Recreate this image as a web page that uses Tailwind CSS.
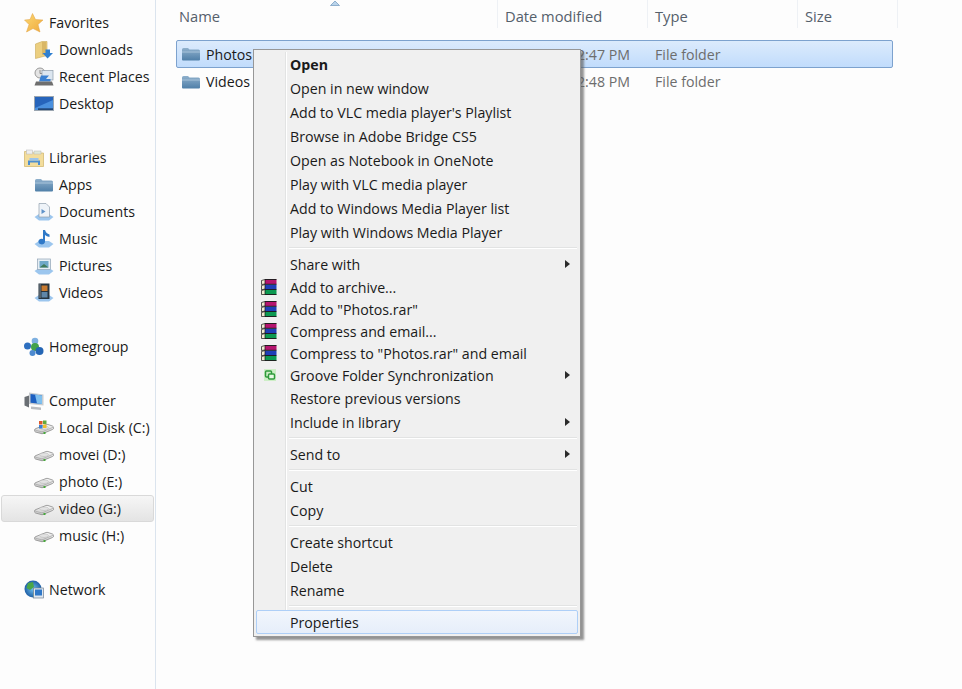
<!DOCTYPE html>
<html lang="en">
<head>
<meta charset="UTF-8">
<title>Explorer context menu</title>
<script src="https://cdn.jsdelivr.net/npm/@tailwindcss/browser@4"></script>
</head>
<body class="bg-[#fdfdfd] font-['Open_Sans',sans-serif] text-[14.2px] leading-[21px] text-[#1a1a1a]">
<!-- shared icons -->
<svg class="absolute w-0 h-0" aria-hidden="true">
  <defs>
    <linearGradient id="fold" x1="0" y1="0" x2="0" y2="1"><stop offset="0" stop-color="#8fb0cc"/><stop offset="1" stop-color="#4f7fa8"/></linearGradient>
    <linearGradient id="disk" x1="0" y1="0" x2="0" y2="1"><stop offset="0" stop-color="#fafafa"/><stop offset="1" stop-color="#c4c4c4"/></linearGradient>
    <radialGradient id="globe"><stop offset="0" stop-color="#6fc0ee"/><stop offset="1" stop-color="#1f5fa6"/></radialGradient>
    <linearGradient id="gold" x1="0" y1="0" x2="1" y2="1"><stop offset="0" stop-color="#fbd873"/><stop offset="1" stop-color="#f0a93c"/></linearGradient>
  </defs>
  <symbol id="folder" viewBox="0 0 20 20"><path d="M1 5.500Q1 4 2.500 4H7L8.500 5.500H17.500Q19 5.500 19 7V15.500Q19 16.500 18 16.500H2Q1 16.500 1 15.500Z" fill="url(#fold)"/><path d="M1 8H19" stroke="#a8c3da" stroke-width="1"/></symbol>
  <symbol id="drive" viewBox="0 0 20 20"><path d="M0.500 12Q0.500 11 2 10.500L12 6.500Q13 6.200 14 6.500L18.500 8Q19.500 8.500 19.500 9.500V10.500Q19.500 11 18.500 11.500L9 15.500Q8 16 7 15.500L1.500 14Q0.500 13.500 0.500 12.500Z" fill="url(#disk)" stroke="#8a8a8a" stroke-width=".8"/><path d="M1 12L7 13.700Q8 14 9 13.500L19 9.300" fill="none" stroke="#a5a5a5" stroke-width=".7"/><ellipse cx="10" cy="9.700" rx="4.500" ry="1.800" fill="#e2e2e2" stroke="#b0b0b0" stroke-width=".5"/><rect x="9.500" y="14" width="2" height="2" fill="#46a83a"/></symbol>
  <symbol id="rar" viewBox="0 0 16 16"><path d="M4 0.500H15.500V5H4Z" fill="#b5146f"/><path d="M4 5.500H15.500V10.500H4Z" fill="#1f3fb8"/><path d="M4 11H15.500V15.500H4Z" fill="#0d9a52"/><path d="M0.500 1.500L4 0.500V5L0.500 5.500ZM0.500 6.500L4 5.500V10L0.500 10.800ZM0.500 11.500L4 10.500V15.500L0.500 15.500Z" fill="#f1ecd2" stroke="#111" stroke-width=".7"/><path d="M4 0.500H15.500M4 5.300H15.500M4 10.500H15.500M4 15.500H15.500" stroke="#111" stroke-width=".9"/></symbol>
</svg>

<div class="flex h-[689px] w-[962px] overflow-hidden relative">
  <!-- navigation pane -->
  <aside class="w-[156px] shrink-0 border-r border-[#dbe4ee] pt-[9px] pl-[1px] pr-[1px]">
    <div class="flex h-[27px] items-center gap-[5px] pl-[23px]">
      <svg class="w-5 h-5" viewBox="0 0 20 20"><path d="M8.500 0.500L11.500 6.500L19 7L14 11.500L16 19L9 15.500L2.500 19L5 11.500L0.500 7L6 6.500Z" fill="url(#gold)" stroke="#e0a040" stroke-width=".5"/></svg>
      <span>Favorites</span>
    </div>
    <div class="flex h-[27px] items-center gap-[5px] pl-[33px]">
      <svg class="w-5 h-5" viewBox="0 0 20 20"><path d="M1.500 4L8 1.500H13V15.500L1.500 18.500Z" fill="#eccf80" stroke="#c9a957" stroke-width=".6"/><path d="M8 2H12V15H8Z" fill="#d9b766"/><path d="M11.500 9.500H16V13H19L13.500 18.500L8.500 13H11.500Z" fill="#2f7fd0"/></svg>
      <span>Downloads</span>
    </div>
    <div class="flex h-[27px] items-center gap-[5px] pl-[33px]">
      <svg class="w-5 h-5" viewBox="0 0 20 20"><circle cx="6" cy="6" r="5" fill="#e4e4e4" stroke="#9a9a9a"/><path d="M6 3V6.500H9" fill="none" stroke="#777" stroke-width=".8"/><rect x="8" y="3.500" width="11" height="9.500" fill="#dce6f0" stroke="#8d9aa8" stroke-width=".7"/><path d="M7 8.500H15L12 12H16.500V14.500L5 14.500Z" fill="#3a80d2"/><path d="M2 14.500H18L19.500 18.500H0.500Z" fill="#6e6e6e"/></svg>
      <span>Recent Places</span>
    </div>
    <div class="flex h-[27px] items-center gap-[5px] pl-[33px]">
      <svg class="w-5 h-5" viewBox="0 0 20 20"><rect x="0.500" y="2.500" width="19" height="14" fill="#2664bb" stroke="#9aa5b0"/><path d="M1 14L19 6V16H1Z" fill="#4a90de"/><rect x="4" y="14.500" width="15" height="1.200" fill="#10294e"/></svg>
      <span>Desktop</span>
    </div>
    <div class="h-[27px]"></div>

    <div class="flex h-[27px] items-center gap-[5px] pl-[23px]">
      <svg class="w-5 h-5" viewBox="0 0 20 20"><path d="M0.500 3.500H8L9.500 5H19.500V18.500H0.500Z" fill="#f3dd9c" stroke="#cfb368" stroke-width=".7"/><rect x="2.500" y="2" width="6" height="4" fill="#eee" stroke="#b8b8b8" stroke-width=".5"/><rect x="10" y="3" width="7" height="3" fill="#dfe9d8" stroke="#b8b8b8" stroke-width=".5"/><path d="M4 12.500H16V17H14V14.500H6V17H4Z" fill="#4d8fd0"/><rect x="5.500" y="10" width="9" height="2.500" fill="#9cc4ea"/></svg>
      <span>Libraries</span>
    </div>
    <div class="flex h-[27px] items-center gap-[5px] pl-[33px]"><svg class="w-5 h-5"><use href="#folder"/></svg><span>Apps</span></div>
    <div class="flex h-[27px] items-center gap-[5px] pl-[33px]">
      <svg class="w-5 h-5" viewBox="0 0 20 20"><path d="M0.500 15L5 12H15L19.500 15L15 18.500H5Z" fill="#9cc6ee"/><path d="M5 1.500H12L15.500 5V15H5Z" fill="#eef3f8" stroke="#8f9fae" stroke-width=".7"/><path d="M7.500 7L11.500 9.500L7.500 12Z" fill="#5f93c9"/></svg>
      <span>Documents</span>
    </div>
    <div class="flex h-[27px] items-center gap-[5px] pl-[33px]">
      <svg class="w-5 h-5" viewBox="0 0 20 20"><path d="M0.500 15L5 12H15L19.500 15L15 18.500H5Z" fill="#9cc6ee"/><path d="M11 1V12.500A3.300 2.800 0 1 1 9 10V1H11Q12 4.500 15.500 5.500V8Q12.500 7.500 11 6Z" fill="#2f79c8"/></svg>
      <span>Music</span>
    </div>
    <div class="flex h-[27px] items-center gap-[5px] pl-[33px]">
      <svg class="w-5 h-5" viewBox="0 0 20 20"><path d="M0.500 15L5 12H15L19.500 15L15 18.500H5Z" fill="#9cc6ee"/><rect x="3.500" y="3" width="13" height="10.500" fill="#e6eef5" stroke="#8fa3b6" stroke-width=".7"/><rect x="5.500" y="5" width="9" height="6.500" fill="#6fa8c8"/><path d="M5.500 11.500L10 8L14.500 11.500Z" fill="#3f7a5a"/></svg>
      <span>Pictures</span>
    </div>
    <div class="flex h-[27px] items-center gap-[5px] pl-[33px]">
      <svg class="w-5 h-5" viewBox="0 0 20 20"><path d="M0.500 15L5 12H15L19.500 15L15 18.500H5Z" fill="#9cc6ee"/><rect x="4.500" y="0.500" width="11" height="15.500" fill="#27343f"/><rect x="7.500" y="2.500" width="6" height="5.500" fill="#c77a30"/><rect x="7.500" y="9" width="6" height="5.500" fill="#5f86a8"/><path d="M6 1.500V15.500" stroke="#dfe7ee" stroke-dasharray="1 1"/></svg>
      <span>Videos</span>
    </div>
    <div class="h-[27px]"></div>

    <div class="flex h-[27px] items-center gap-[5px] pl-[23px]">
      <svg class="w-5 h-5" viewBox="0 0 20 20"><circle cx="3.500" cy="9" r="3.500" fill="#2d6fc0"/><circle cx="11" cy="4" r="3.300" fill="#7eb0e0"/><circle cx="11" cy="10" r="4" fill="#43a24a"/><circle cx="15.500" cy="14" r="4" fill="#2566b5"/><circle cx="8.500" cy="16" r="3" fill="#4d8ad0"/></svg>
      <span>Homegroup</span>
    </div>
    <div class="h-[27px]"></div>

    <div class="flex h-[27px] items-center gap-[5px] pl-[23px]">
      <svg class="w-5 h-5" viewBox="0 0 20 20"><path d="M5 1.500L19.500 3.500V14.500L5 13Z" fill="#c8ccd0"/><path d="M6.500 3L18 4.500V13L6.500 11.700Z" fill="#1c5fc0"/><path d="M11 3.500L18 4.500V13L13 12.500Z" fill="#7fc0ef"/><path d="M0.500 6L5 4.500V16.500L0.500 14.500Z" fill="#6a6f74"/><path d="M7 15.500L17 16.500V19L7 18Z" fill="#b9bcc0"/></svg>
      <span>Computer</span>
    </div>
    <div class="flex h-[27px] items-center gap-[5px] pl-[33px]">
      <svg class="w-5 h-5" viewBox="0 0 20 20"><use href="#drive"/><rect x="5" y="3" width="3.500" height="3.500" fill="#dd5a2b"/><rect x="9" y="2.500" width="3.500" height="3.500" fill="#63aa3d"/><rect x="5" y="7" width="3.500" height="3.500" fill="#3a7fd0"/><rect x="9" y="6.500" width="3.500" height="3.500" fill="#f0c02f"/></svg>
      <span>Local Disk (C:)</span>
    </div>
    <div class="flex h-[27px] items-center gap-[5px] pl-[33px]"><svg class="w-5 h-5"><use href="#drive"/></svg><span>movei (D:)</span></div>
    <div class="flex h-[27px] items-center gap-[5px] pl-[33px]"><svg class="w-5 h-5"><use href="#drive"/></svg><span>photo (E:)</span></div>
    <div class="flex h-[27px] items-center gap-[5px] pl-[32px] rounded-[3px] border border-[#d9d9d9] bg-linear-to-b from-[#f6f6f6] to-[#e4e4e4]"><svg class="w-5 h-5"><use href="#drive"/></svg><span>video (G:)</span></div>
    <div class="flex h-[27px] items-center gap-[5px] pl-[33px]"><svg class="w-5 h-5"><use href="#drive"/></svg><span>music (H:)</span></div>
    <div class="h-[27px]"></div>

    <div class="flex h-[27px] items-center gap-[5px] pl-[23px]">
      <svg class="w-5 h-5" viewBox="0 0 20 20"><circle cx="9" cy="9" r="8.500" fill="url(#globe)"/><path d="M4 3L9 2L10 7L6 10L2.500 8ZM9 13L12 12L12 16L9 17Z" fill="#4aa648"/><rect x="9.500" y="8" width="10" height="10" fill="#dfe7ef" stroke="#6f8193" stroke-width=".7"/><rect x="11" y="9.500" width="7" height="6" fill="#2f78c8"/></svg>
      <span>Network</span>
    </div>
  </aside>

  <!-- file list -->
  <main class="flex-1 min-w-0 relative">
    <div class="relative flex h-[33px] pb-[5px] text-[14.7px] leading-[20px] text-[#55606b]">
      <div class="w-[342px] border-r border-[#eef1f5] pl-[23px] pt-[6px]">Name</div>
      <div class="w-[150px] border-r border-[#eef1f5] pl-[7px] pt-[6px]">Date modified</div>
      <div class="w-[150px] border-r border-[#eef1f5] pl-[7px] pt-[6px]">Type</div>
      <div class="w-[100px] border-r border-[#eef1f5] pl-[7px] pt-[6px]">Size</div>
      <svg class="absolute left-[174px] top-0 w-[10px] h-[6px]" viewBox="0 0 10 6"><path d="M5 1L9.500 5.500H0.500Z" fill="#b9d3ea" stroke="#6f97bc" stroke-width=".7"/></svg>
    </div>
    <div class="pt-[7px] pl-[20px] w-[737px]">
      <div class="flex h-[28px] items-center rounded-[2px] border border-[#7da2ce] bg-linear-to-b from-[#dcebfc] to-[#c1dcfc] pl-[4px]">
        <svg class="w-5 h-5 shrink-0"><use href="#folder"/></svg>
        <span class="w-[297px] pl-[5px] shrink-0">Photos</span>
        <span class="w-[157px] text-[#6d6d6d] shrink-0">1/12/2013 12:47 PM</span>
        <span class="text-[#6d6d6d]">File folder</span>
      </div>
      <div class="flex h-[27px] items-center pl-[5px]">
        <svg class="w-5 h-5 shrink-0"><use href="#folder"/></svg>
        <span class="w-[297px] pl-[5px] shrink-0">Videos</span>
        <span class="w-[157px] text-[#6d6d6d] shrink-0">1/12/2013 12:48 PM</span>
        <span class="text-[#6d6d6d]">File folder</span>
      </div>
    </div>
  </main>

  <!-- context menu -->
  <div class="absolute left-[253px] top-[49px] w-[328px] h-[588px] border border-[#979797] bg-[#f0f0f0] p-[2px] shadow-[3px_3px_2px_rgba(90,90,90,0.65)]">
    <div class="absolute left-[31px] top-[2px] bottom-[2px] w-[2px] border-l border-[#e2e3e3] bg-white"></div>
    <div class="relative flex flex-col">
      <div class="h-6 flex items-center pl-[34px] font-bold">Open</div>
      <div class="h-6 flex items-center pl-[34px]">Open in new window</div>
      <div class="h-6 flex items-center pl-[34px]">Add to VLC media player's Playlist</div>
      <div class="h-6 flex items-center pl-[34px]">Browse in Adobe Bridge CS5</div>
      <div class="h-6 flex items-center pl-[34px]">Open as Notebook in OneNote</div>
      <div class="h-6 flex items-center pl-[34px]">Play with VLC media player</div>
      <div class="h-6 flex items-center pl-[34px]">Add to Windows Media Player list</div>
      <div class="h-6 flex items-center pl-[34px]">Play with Windows Media Player</div>
      <div class="h-2 flex items-center pl-[33px] pr-[1px]"><div class="w-full h-[2px] border-t border-[#e2e3e3] bg-white"></div></div>

      <div class="h-6 flex items-center justify-between pl-[34px] pr-[8px]">Share with<svg class="w-[5px] h-[8px]" viewBox="0 0 5 8"><path d="M0 0L5 4L0 8Z" fill="#2b2b2b"/></svg></div>
      <div class="h-[22px] flex items-center"><svg class="w-4 h-4 ml-[5px] mr-[13px]"><use href="#rar"/></svg>Add to archive...</div>
      <div class="h-[22px] flex items-center"><svg class="w-4 h-4 ml-[5px] mr-[13px]"><use href="#rar"/></svg>Add to "Photos.rar"</div>
      <div class="h-[22px] flex items-center"><svg class="w-4 h-4 ml-[5px] mr-[13px]"><use href="#rar"/></svg>Compress and email...</div>
      <div class="h-[22px] flex items-center"><svg class="w-4 h-4 ml-[5px] mr-[13px]"><use href="#rar"/></svg>Compress to "Photos.rar" and email</div>
      <div class="h-[22px] flex items-center pr-[8px]">
        <svg class="w-3 h-3 ml-[8px] mr-[14px]" viewBox="0 0 12 12"><rect width="12" height="12" fill="#cdeec6"/><rect x="1.500" y="2" width="6" height="6" rx="1" fill="none" stroke="#2f9a3c" stroke-width="1.500"/><rect x="4.500" y="5" width="6" height="5" rx="1" fill="#e8f8e4" stroke="#2f9a3c" stroke-width="1.500"/></svg>
        <span class="flex-1">Groove Folder Synchronization</span>
        <svg class="w-[5px] h-[8px]" viewBox="0 0 5 8"><path d="M0 0L5 4L0 8Z" fill="#2b2b2b"/></svg>
      </div>
      <div class="h-6 flex items-center pl-[34px]">Restore previous versions</div>
      <div class="h-6 flex items-center justify-between pl-[34px] pr-[8px]">Include in library<svg class="w-[5px] h-[8px]" viewBox="0 0 5 8"><path d="M0 0L5 4L0 8Z" fill="#2b2b2b"/></svg></div>
      <div class="h-2 flex items-center pl-[33px] pr-[1px]"><div class="w-full h-[2px] border-t border-[#e2e3e3] bg-white"></div></div>

      <div class="h-6 flex items-center justify-between pl-[34px] pr-[8px]">Send to<svg class="w-[5px] h-[8px]" viewBox="0 0 5 8"><path d="M0 0L5 4L0 8Z" fill="#2b2b2b"/></svg></div>
      <div class="h-2 flex items-center pl-[33px] pr-[1px]"><div class="w-full h-[2px] border-t border-[#e2e3e3] bg-white"></div></div>

      <div class="h-6 flex items-center pl-[34px]">Cut</div>
      <div class="h-6 flex items-center pl-[34px]">Copy</div>
      <div class="h-2 flex items-center pl-[33px] pr-[1px]"><div class="w-full h-[2px] border-t border-[#e2e3e3] bg-white"></div></div>

      <div class="h-6 flex items-center pl-[34px]">Create shortcut</div>
      <div class="h-6 flex items-center pl-[34px]">Delete</div>
      <div class="h-6 flex items-center pl-[34px]">Rename</div>
      <div class="h-2 flex items-center pl-[33px] pr-[1px]"><div class="w-full h-[2px] border-t border-[#e2e3e3] bg-white"></div></div>

      <div class="h-6 flex items-center pl-[33px] rounded-[2px] border border-[#aecff7] bg-linear-to-b from-[#f2f6fc] to-[#e6eefa]">Properties</div>
    </div>
  </div>
</div>
</body>
</html>
